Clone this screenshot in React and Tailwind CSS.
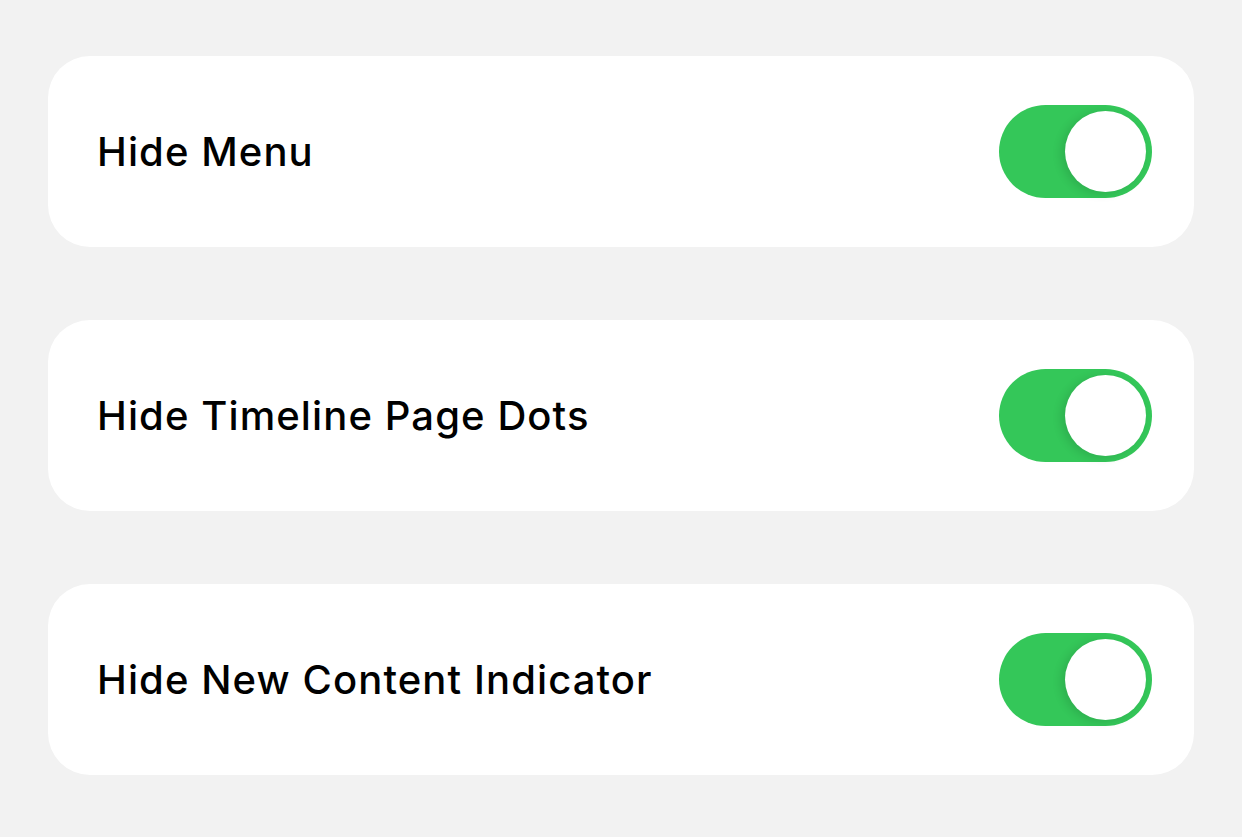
export default function App() {
  const items = ["Hide Menu", "Hide Timeline Page Dots", "Hide New Content Indicator"];
  return (
    <div className="w-[1242px] h-[837px] bg-[#f2f2f2] pt-[56px] px-[48px] flex flex-col gap-[73px]" style={{ fontFamily: "Inter, 'Noto Sans', sans-serif" }}>
      {items.map((t) => (
        <div key={t} className="h-[191px] bg-white rounded-[42px] flex items-center justify-between pl-[49px] pr-[42px]">
          <span className="text-[40px] font-medium text-black tracking-[1.1px]">{t}</span>
          <div className="w-[153px] h-[93px] rounded-full bg-[#34c759] flex items-center justify-end pr-[6px]">
            <div className="w-[81px] h-[81px] rounded-full bg-white shadow-[-4px_2px_10px_rgba(0,0,0,0.12)]" />
          </div>
        </div>
      ))}
    </div>
  );
}
